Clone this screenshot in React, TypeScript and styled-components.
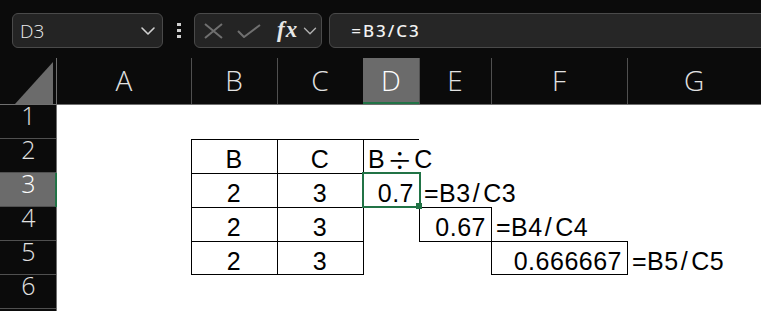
import React from 'react';
import styled, { createGlobalStyle } from 'styled-components';
import { ChevronDown } from 'lucide-react';

const GlobalStyle = createGlobalStyle`
  html, body {
    margin: 0;
    padding: 0;
    background: #0b0b0b;
    font-family: "Liberation Sans", Arial, sans-serif;
  }
`;

const COLUMNS = '57px 134px 86px 86px 56px 72px 136px 134px';
const GREEN = '#217346';

const Screen = styled.div`
  width: 761px;
  height: 311px;
  overflow: hidden;
  background: #0b0b0b;
`;

const Toolbar = styled.div`
  height: 58px;
  box-sizing: border-box;
  padding: 13px 0 0 12px;
  display: flex;
  align-items: flex-start;
`;

const NameBox = styled.div`
  flex: 0 0 151px;
  height: 35px;
  box-sizing: border-box;
  border: 1px solid #4a4a4a;
  border-radius: 6px;
  background: #242424;
  display: flex;
  align-items: center;
  justify-content: space-between;
  padding: 0 2px 0 7px;
  color: #ececec;
  font-family: "Open Sans", sans-serif;
  font-weight: 300;
  font-size: 19px;
`;

const Dots = styled.div`
  flex: 0 0 31px;
  height: 35px;
  display: flex;
  flex-direction: column;
  align-items: center;
  justify-content: center;
  gap: 3px;

  span {
    width: 4px;
    height: 3px;
    background: #d0d0d0;
  }
`;

const ButtonGroup = styled.div`
  flex: 0 0 127px;
  height: 35px;
  box-sizing: border-box;
  border: 1px solid #4a4a4a;
  border-radius: 6px;
  background: #242424;
  display: flex;
  align-items: center;
  padding-left: 9px;
`;

const Glyph = styled.span<{ $gap?: number }>`
  display: flex;
  align-items: center;
  margin-left: ${(p) => p.$gap ?? 0}px;
`;

const Fx = styled.span`
  font-family: "Liberation Serif", "DejaVu Serif", serif;
  font-style: italic;
  font-weight: bold;
  font-size: 23px;
  letter-spacing: 1px;
  color: #e6e6e6;
  margin-left: 16px;
  margin-top: -2px;
`;

const FormulaBar = styled.div`
  flex: 0 0 460px;
  margin-left: 7px;
  height: 35px;
  box-sizing: border-box;
  border: 1px solid #4a4a4a;
  border-radius: 6px;
  background: #262626;
  display: flex;
  align-items: center;
  padding-left: 21px;
  color: #f2f2f2;
  font-family: "Noto Sans", sans-serif;
  font-weight: 500;
  font-size: 17px;
  letter-spacing: 2px;
`;

const HeaderRow = styled.div`
  display: grid;
  grid-template-columns: ${COLUMNS};
  height: 47px;
  box-sizing: border-box;
  border-bottom: 1px solid #707070;
`;

const Corner = styled.div`
  display: flex;
  align-items: flex-end;
  justify-content: flex-end;
  padding-right: 3px;
  border-right: 1px solid #707070;
`;

const Triangle = styled.div`
  width: 38px;
  height: 42px;
  background: #6b6b6b;
  clip-path: polygon(100% 0, 100% 100%, 0 100%);
`;

const ColHeader = styled.div<{ $active?: boolean; $divider?: boolean }>`
  display: flex;
  align-items: center;
  justify-content: center;
  padding-bottom: 3px;
  box-sizing: border-box;
  font-family: "Open Sans", sans-serif;
  font-weight: 300;
  font-size: 28px;
  color: ${(p) => (p.$active ? '#ffffff' : '#e2e2e2')};
  background: ${(p) => (p.$active ? '#6b6b6b' : 'transparent')};
  box-shadow: ${(p) =>
    p.$active ? `inset 0 -2px ${GREEN}` : p.$divider ? 'inset 1px 0 #505050' : 'none'};
`;

const SheetRow = styled.div`
  display: grid;
  grid-template-columns: ${COLUMNS};
  height: 34px;
  background: #ffffff;
`;

const RowHeader = styled.div<{ $active?: boolean }>`
  display: flex;
  justify-content: center;
  align-items: flex-start;
  background: ${(p) => (p.$active ? '#6b6b6b' : '#0b0b0b')};
  color: ${(p) => (p.$active ? '#ffffff' : '#e2e2e2')};
  font-family: "Open Sans", sans-serif;
  font-weight: 300;
  font-size: 25px;
  line-height: 20px;
  box-shadow: ${(p) =>
    p.$active
      ? `inset -2px 0 ${GREEN}, inset 0 -1px #505050`
      : 'inset -1px 0 #707070, inset 0 -1px #505050'};
`;

type Align = 'left' | 'center' | 'right';

type CellProps = {
  $t?: boolean;
  $l?: boolean;
  $b?: boolean;
  $align?: Align;
  $selected?: boolean;
};

const edges = (p: CellProps) => {
  const lines: string[] = [];
  if (p.$t) lines.push('inset 0 1px #000');
  if (p.$l) lines.push('inset 1px 0 #000');
  if (p.$b) lines.push('inset 0 -1px #000');
  return lines.length ? lines.join(', ') : 'none';
};

const Cell = styled.div<CellProps>`
  position: ${(p) => (p.$selected ? 'relative' : 'static')};
  min-width: 0;
  box-sizing: border-box;
  box-shadow: ${edges};
  display: flex;
  align-items: flex-end;
  justify-content: ${(p) =>
    p.$align === 'right' ? 'flex-end' : p.$align === 'center' ? 'center' : 'flex-start'};
  padding: 0 5px 1px 5px;
  font-size: 25px;
  line-height: 25px;
  letter-spacing: 0.5px;
  color: #000;
  white-space: nowrap;
`;

const Selection = styled.span`
  position: absolute;
  top: -1px;
  left: -1px;
  right: -2px;
  bottom: -1px;
  border: 2px solid ${GREEN};
`;

const Handle = styled.span`
  position: absolute;
  right: -3px;
  bottom: -3px;
  width: 6px;
  height: 6px;
  background: ${GREEN};
`;

const Wide = styled.span`
  font-family: "Noto Sans CJK JP", sans-serif;
  letter-spacing: 0;
  margin: 0 2px;
`;

const Slash = styled.span`
  margin: 0 3px 0 2px;
`;

type CellData = {
  t?: boolean;
  l?: boolean;
  b?: boolean;
  align?: Align;
  selected?: boolean;
  content?: React.ReactNode;
};

const ref = (col: string, row: number) => (
  <>
    ={'B' + row}
    <Slash>/</Slash>
    {col + row}
  </>
);

const rows: CellData[][] = [
  [{}, {}, {}, {}, {}, {}, {}],
  [
    {},
    { t: true, l: true, align: 'center', content: 'B' },
    { t: true, l: true, align: 'center', content: 'C' },
    { t: true, l: true, content: <>B<Wide>÷</Wide>C</> },
    {},
    {},
    {},
  ],
  [
    {},
    { t: true, l: true, align: 'center', content: '2' },
    { t: true, l: true, align: 'center', content: '3' },
    { t: true, l: true, align: 'right', selected: true, content: '0.7' },
    { content: ref('C', 3) },
    {},
    {},
  ],
  [
    {},
    { t: true, l: true, align: 'center', content: '2' },
    { t: true, l: true, align: 'center', content: '3' },
    { l: true },
    { t: true, l: true, align: 'right', content: '0.67' },
    { l: true, content: ref('C', 4) },
    {},
  ],
  [
    {},
    { t: true, l: true, b: true, align: 'center', content: '2' },
    { t: true, l: true, b: true, align: 'center', content: '3' },
    { l: true },
    { t: true },
    { t: true, l: true, b: true, align: 'right', content: '0.666667' },
    { l: true, content: ref('C', 5) },
  ],
  [{}, {}, {}, {}, {}, {}, {}],
  [{}, {}, {}, {}, {}, {}, {}],
];

const columns = ['A', 'B', 'C', 'D', 'E', 'F', 'G'];

const CrossIcon = () => (
  <svg width="19" height="16" viewBox="0 0 19 16">
    <path d="M1 1 L18 15 M18 1 L1 15" stroke="#707070" strokeWidth="2" fill="none" />
  </svg>
);

const CheckIcon = () => (
  <svg width="24" height="14" viewBox="0 0 24 14">
    <path d="M1 7 L7 13 L23 1" stroke="#707070" strokeWidth="2" fill="none" />
  </svg>
);

const App: React.FC = () => {
  return (
    <>
      <GlobalStyle />
      <Screen>
        <Toolbar>
          <NameBox>
            D3
            <ChevronDown size={24} strokeWidth={1.6} color="#d0d0d0" />
          </NameBox>
          <Dots>
            <span />
            <span />
            <span />
          </Dots>
          <ButtonGroup>
            <Glyph>
              <CrossIcon />
            </Glyph>
            <Glyph $gap={14}>
              <CheckIcon />
            </Glyph>
            <Fx>fx</Fx>
            <Glyph $gap={1}>
              <ChevronDown size={22} strokeWidth={1.5} color="#b0b0b0" />
            </Glyph>
          </ButtonGroup>
          <FormulaBar>=B3/C3</FormulaBar>
        </Toolbar>
        <HeaderRow>
          <Corner>
            <Triangle />
          </Corner>
          {columns.map((c) => (
            <ColHeader key={c} $active={c === 'D'} $divider={c !== 'A'}>
              {c}
            </ColHeader>
          ))}
        </HeaderRow>
        {rows.map((cells, i) => (
          <SheetRow key={i}>
            <RowHeader $active={i === 2}>{i + 1}</RowHeader>
            {cells.map((cell, j) => (
              <Cell
                key={j}
                $t={cell.t}
                $l={cell.l}
                $b={cell.b}
                $align={cell.align}
                $selected={cell.selected}
              >
                {cell.content}
                {cell.selected && (
                  <Selection>
                    <Handle />
                  </Selection>
                )}
              </Cell>
            ))}
          </SheetRow>
        ))}
      </Screen>
    </>
  );
};

export default App;
